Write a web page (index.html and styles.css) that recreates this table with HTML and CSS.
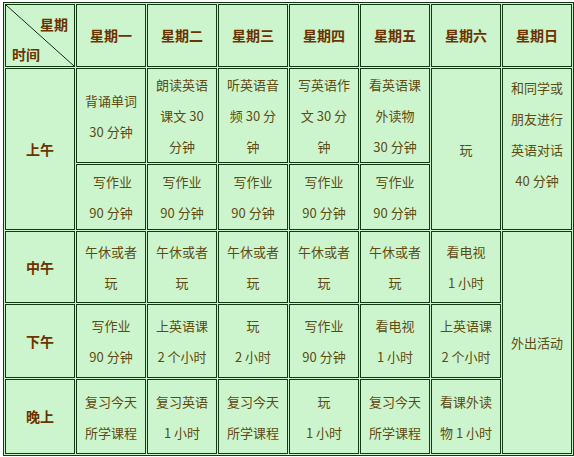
FILE: index.html
```html
<!DOCTYPE html>
<html lang="zh">
<head>
<meta charset="utf-8">
<title>作息时间表</title>
<link rel="stylesheet" href="styles.css">
</head>
<body>
<table class="schedule">
  <tr class="r-head">
    <td class="corner">
      <div class="corner-top">星期</div>
      <div class="corner-bottom">时间</div>
    </td>
    <td class="hd">星期一</td>
    <td class="hd">星期二</td>
    <td class="hd">星期三</td>
    <td class="hd">星期四</td>
    <td class="hd">星期五</td>
    <td class="hd">星期六</td>
    <td class="hd">星期日</td>
  </tr>
  <tr class="r-am1">
    <td class="hd" rowspan="2">上午</td>
    <td>背诵单词<br>30 分钟</td>
    <td>朗读英语<br>课文 30<br>分钟</td>
    <td>听英语音<br>频 30 分<br>钟</td>
    <td>写英语作<br>文 30 分<br>钟</td>
    <td>看英语课<br>外读物<br>30 分钟</td>
    <td rowspan="2">玩</td>
    <td rowspan="2" class="lift">和同学或<br>朋友进行<br>英语对话<br>40 分钟</td>
  </tr>
  <tr class="r-am2">
    <td>&nbsp;写作业<br>90 分钟</td>
    <td>写作业<br>90 分钟</td>
    <td>写作业<br>90 分钟</td>
    <td>写作业<br>90 分钟</td>
    <td>写作业<br>90 分钟</td>
  </tr>
  <tr class="r-noon">
    <td class="hd">中午</td>
    <td>午休或者<br>玩</td>
    <td>午休或者<br>玩</td>
    <td>午休或者<br>玩</td>
    <td>午休或者<br>玩</td>
    <td>午休或者<br>玩</td>
    <td>看电视<br>1 小时</td>
    <td rowspan="3">外出活动</td>
  </tr>
  <tr class="r-pm">
    <td class="hd">下午</td>
    <td>写作业<br>90 分钟</td>
    <td>上英语课<br>2 个小时</td>
    <td>玩<br>2 小时</td>
    <td>写作业<br>90 分钟</td>
    <td>看电视<br>1 小时</td>
    <td>上英语课<br>2 个小时</td>
  </tr>
  <tr class="r-eve">
    <td class="hd">晚上</td>
    <td>复习今天<br>所学课程</td>
    <td>复习英语<br>1 小时</td>
    <td>复习今天<br>所学课程</td>
    <td>玩<br>1 小时</td>
    <td>复习今天<br>所学课程</td>
    <td>看课外读<br>物 1 小时</td>
  </tr>
</table>
</body>
</html>
```

FILE: styles.css
```css
html, body {
  margin: 0;
  padding: 0;
  background: #ffffff;
}

body {
  font-family: "Noto Sans CJK SC", "Liberation Sans", sans-serif;
}

.schedule {
  margin: 2px 0 0 3px;
  border-collapse: separate;
  border-spacing: 1px;
  border: 1px solid #0f3a12;
  background: #cdf5cd;
  table-layout: fixed;
  width: 571px;
}

.schedule td {
  width: 68px;
  padding: 0;
  border: 1px solid #0f3a12;
  background: #cdf5cd;
  color: #5e4b12;
  font-size: 13px;
  line-height: 31px;
  text-align: center;
  vertical-align: middle;
  white-space: nowrap;
  box-sizing: border-box;
}

.schedule td.hd {
  color: #6a3300;
  font-weight: bold;
  font-size: 14px;
}

.r-head td { height: 63px; }
.r-am1 td { height: 94px; }
.r-am2 td { height: 66px; }
.r-noon td { height: 72px; }
.r-pm td { height: 74px; }
.r-eve td { height: 75px; }

.schedule td.lift {
  padding-bottom: 31px;
}

.schedule td.corner {
  background: linear-gradient(to top right,
    transparent calc(50% - 0.7px),
    #0f1a0f 50%,
    transparent calc(50% + 0.7px)), #cdf5cd;
  color: #6a3300;
  font-weight: bold;
  font-size: 14px;
  line-height: 16px;
  vertical-align: top;
  padding: 0;
}

.corner-top {
  text-align: right;
  padding: 11px 6px 0 0;
}

.corner-bottom {
  text-align: left;
  padding: 14px 0 0 6px;
}
```
